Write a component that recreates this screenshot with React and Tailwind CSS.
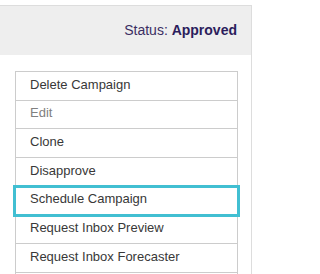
import React from "react";

const items = [
  { label: "Delete Campaign" },
  { label: "Edit", disabled: true },
  { label: "Clone" },
  { label: "Disapprove" },
  { label: "Schedule Campaign", focus: true },
  { label: "Request Inbox Preview" },
  { label: "Request Inbox Forecaster" },
  { label: "" },
];

export default function App() {
  return (
    <div
      className="w-[258px] h-[274px] overflow-hidden bg-white pt-[5px]"
      style={{ fontFamily: '"Liberation Sans", Arial, sans-serif' }}
    >
      <div className="w-[252px] border-t border-r border-[#dddddd] bg-white">
        <div className="h-[49px] bg-[#eeeeee] flex items-center justify-end pr-[14px] text-[14px] text-[#3b2e63]">
          <span>
            Status: <span className="font-bold text-[#2b1d5c]">Approved</span>
          </span>
        </div>
        <div className="pt-[16px] pl-[15px] pr-[13px] pb-[20px]">
          <div className="border-t border-[#cccccc]">
            {items.map((it, i) => (
              <div
                key={i}
                className={
                  "h-[28.67px] border-x border-b border-[#cccccc] flex items-center pl-[14px] text-[13px] leading-[18px] " +
                  (it.disabled ? "text-[#808080] " : "text-[#383838] ") +
                  (it.focus
                    ? "relative z-10 outline-[3px] outline-solid outline-[#41bfd2] -outline-offset-1"
                    : "")
                }
              >
                <span className="-translate-y-[1px]">{it.label}</span>
              </div>
            ))}
          </div>
        </div>
      </div>
    </div>
  );
}
